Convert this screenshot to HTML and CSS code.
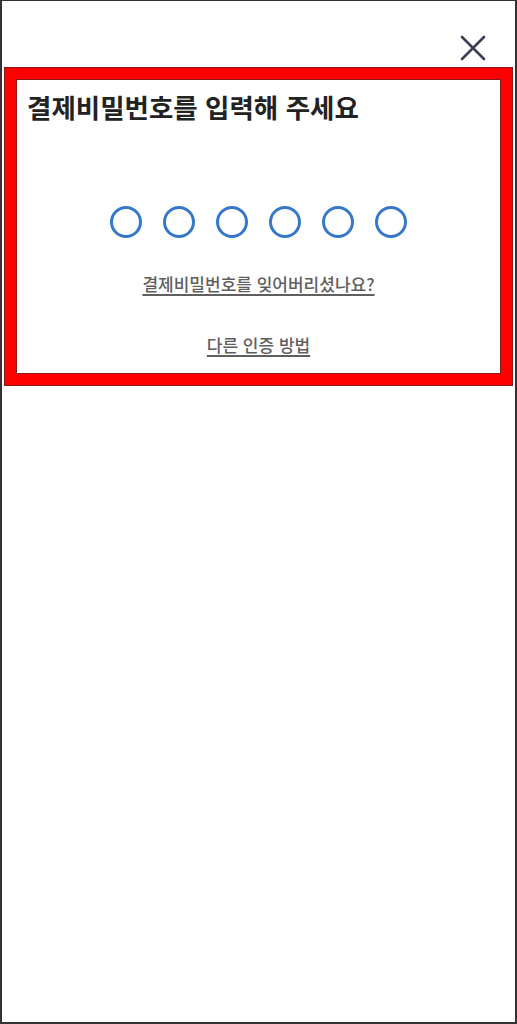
FILE: index.html
```html
<!DOCTYPE html>
<html lang="ko">
<head>
<meta charset="utf-8">
<title>결제비밀번호 입력</title>
<link rel="stylesheet" href="styles.css">
</head>
<body>
<div class="screen">
  <div class="topbar">
    <button class="close" aria-label="닫기">
      <svg width="26" height="26" viewBox="0 0 26 26" fill="none" stroke="#3b3f57" stroke-width="2.6" stroke-linecap="round">
        <path d="M2 2 L24 24 M24 2 L2 24"/>
      </svg>
    </button>
  </div>
  <div class="frame">
    <h1 class="title">결제비밀번호를 입력해 주세요</h1>
    <div class="dots">
      <span class="dot"></span>
      <span class="dot"></span>
      <span class="dot"></span>
      <span class="dot"></span>
      <span class="dot"></span>
      <span class="dot"></span>
    </div>
    <a class="link forgot" href="#">결제비밀번호를 잊어버리셨나요?</a>
    <a class="link other" href="#">다른 인증 방법</a>
  </div>
</div>
</body>
</html>
```

FILE: styles.css
```css
html, body {
  margin: 0;
  padding: 0;
  background: #fff;
}
body {
  font-family: "Noto Sans CJK KR", "Noto Sans", sans-serif;
}
.screen {
  box-sizing: border-box;
  width: 517px;
  height: 1024px;
  border: 2px solid #333;
  border-top-width: 1px;
  padding: 0 3px;
  background: #fff;
}
.topbar {
  display: flex;
  justify-content: flex-end;
  height: 67px;
  padding-right: 26px;
  box-sizing: border-box;
  padding-top: 34px;
}
.close {
  border: 0;
  background: none;
  padding: 0;
  width: 26px;
  height: 26px;
  cursor: pointer;
  display: block;
}
.close svg { display: block; }
.frame {
  box-sizing: border-box;
  height: 317px;
  border: 11px solid #ff0000;
  box-shadow: 0 0 0 1px #8a1a1a, inset 0 0 0 1px #8a1a1a;
  display: flex;
  flex-direction: column;
  align-items: center;
  padding-top: 10px;
}
.title {
  align-self: flex-start;
  margin: 0 0 0 11px;
  font-size: 26.5px;
  line-height: 36px;
  font-weight: 700;
  color: #222;
  letter-spacing: 0;
}
.dots {
  display: flex;
  gap: 21px;
  margin-top: 81px;
}
.dot {
  box-sizing: border-box;
  width: 32px;
  height: 32px;
  border: 3px solid #3577c9;
  border-radius: 50%;
}
.link {
  color: #5f5f5f;
  font-size: 17px;
  font-weight: 500;
  line-height: 24px;
  text-decoration: underline;
  text-underline-offset: 3px;
  text-decoration-thickness: 1.5px;
  letter-spacing: 0;
}
.forgot {
  margin-top: 34px;
}
.other {
  margin-top: 37px;
}
```
